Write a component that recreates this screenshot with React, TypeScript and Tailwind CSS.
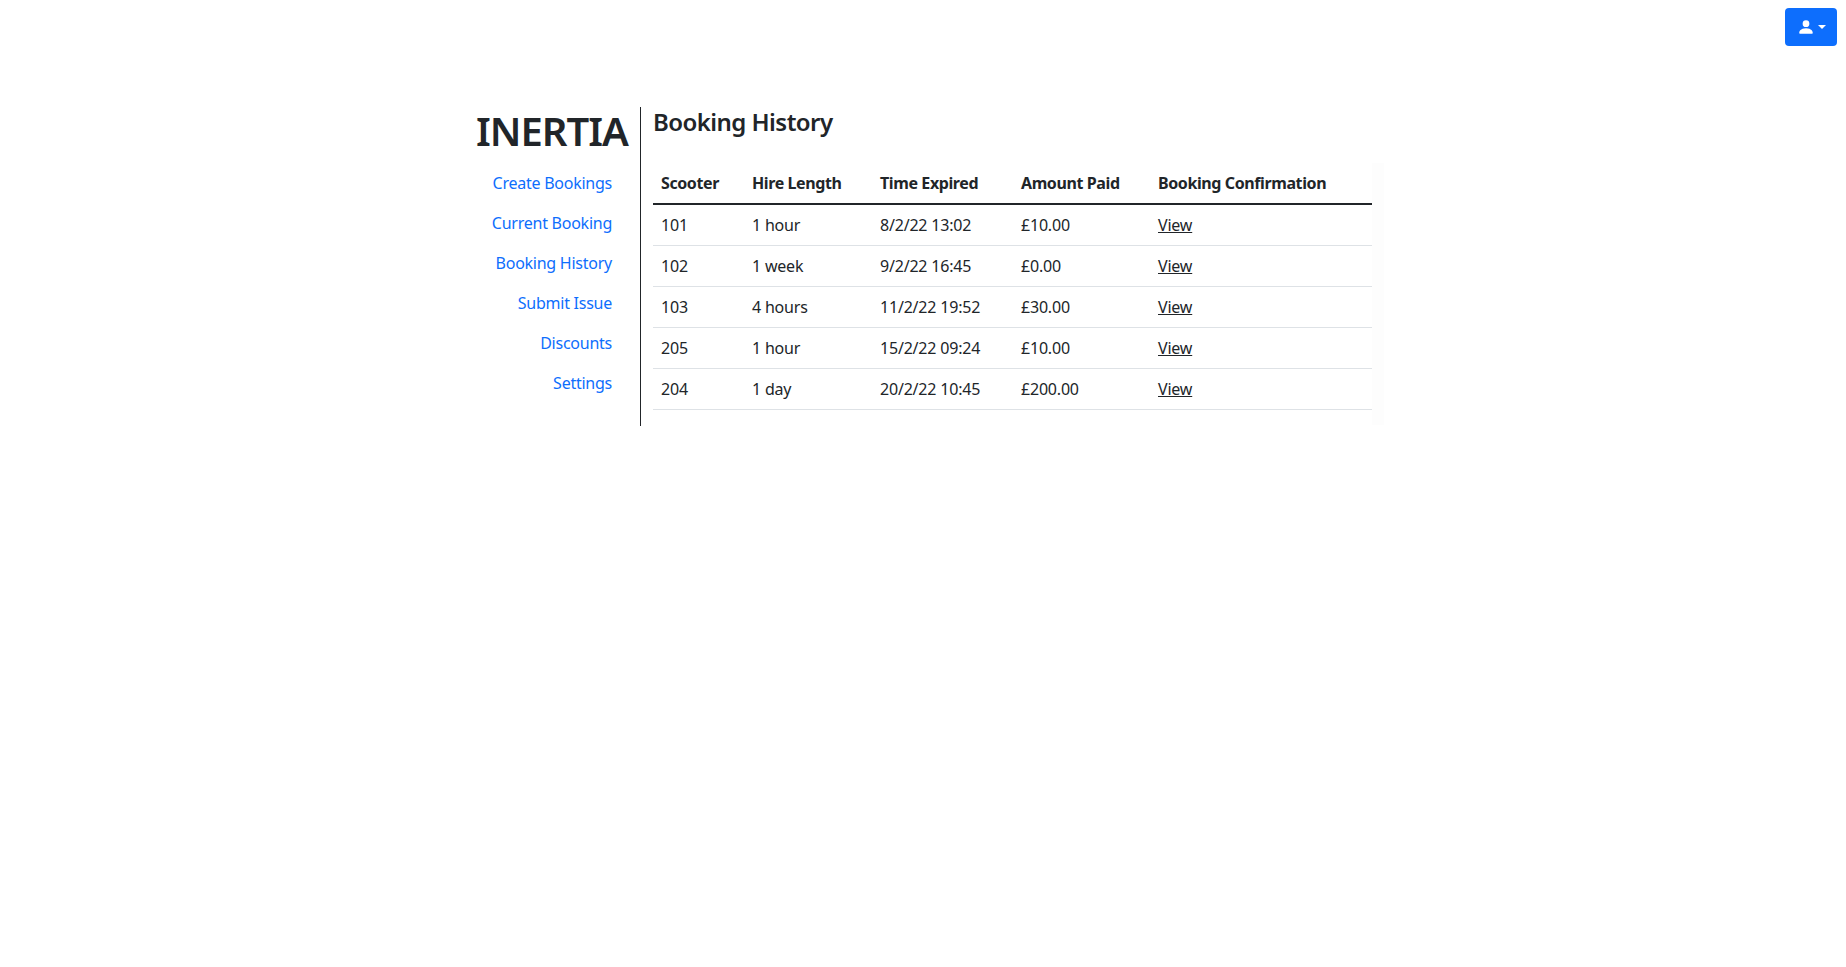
import React from "react";

const links = ["Create Bookings", "Current Booking", "Booking History", "Submit Issue", "Discounts", "Settings"];
const rows = [
  ["101", "1 hour", "8/2/22 13:02", "£10.00"],
  ["102", "1 week", "9/2/22 16:45", "£0.00"],
  ["103", "4 hours", "11/2/22 19:52", "£30.00"],
  ["205", "1 hour", "15/2/22 09:24", "£10.00"],
  ["204", "1 day", "20/2/22 10:45", "£200.00"],
];
const heads = ["Scooter", "Hire Length", "Time Expired", "Amount Paid", "Booking Confirmation"];

export default function App() {
  return (
    <div className="min-h-[967px] bg-white text-[#212529] text-[16px] leading-[24px] font-['Noto_Sans',sans-serif]">
      <div className="flex justify-end pt-2 pr-[9px]">
        <button className="w-[52px] h-[38px] rounded-[4px] bg-[#0d6efd] flex items-center justify-center gap-[3px] text-white">
          <svg width="18" height="18" viewBox="0 0 16 16" fill="currentColor">
            <path d="M3 14s-1 0-1-1 1-4 6-4 6 3 6 4-1 1-1 1H3zm5-6a3 3 0 1 0 0-6 3 3 0 0 0 0 6z" />
          </svg>
          <span className="w-0 h-0 border-x-[4px] border-x-transparent border-t-[4.5px] border-t-white" />
        </button>
      </div>
      <div className="flex w-[920px] ml-[464px] mt-[61px]">
        <aside className="w-[177px] h-[319px] border-r border-[#212529] pr-[12px] text-right">
          <h1 className="text-[40px] leading-[48px] font-semibold tracking-[-1px] mb-[8px] whitespace-nowrap">INERTIA</h1>
          <nav className="flex flex-col tracking-[-0.25px]">
            {links.map((l) => (
              <a key={l} href="#" className="h-[40px] pr-[16px] py-[8px] text-[#0d6efd] whitespace-nowrap">{l}</a>
            ))}
          </nav>
        </aside>
        <main className="flex-1 pl-[12px]">
          <h3 className="text-[24px] leading-[29px] font-semibold tracking-[-0.55px] mt-0 h-[56px] whitespace-nowrap">Booking History</h3>
          <div className="bg-[#fdfdfd] h-[262px]">
            <div className="bg-white w-[719px] h-full">
              <table className="w-[719px] table-fixed border-collapse tracking-[-0.2px]">
                <colgroup>
                  <col className="w-[91px]" />
                  <col className="w-[128px]" />
                  <col className="w-[141px]" />
                  <col className="w-[137px]" />
                  <col className="w-[222px]" />
                </colgroup>
                <thead>
                  <tr className="h-[41px] border-b-2 border-[#212529]">
                    {heads.map((h) => (
                      <th key={h} className="px-2 text-left font-bold tracking-[-0.4px] whitespace-nowrap">{h}</th>
                    ))}
                  </tr>
                </thead>
                <tbody>
                  {rows.map((r) => (
                    <tr key={r[0]} className="h-[41px] border-b border-[#dee2e6]">
                      {r.map((c, i) => (
                        <td key={i} className="px-2 whitespace-nowrap">{c}</td>
                      ))}
                      <td className="px-2"><a href="#" className="underline">View</a></td>
                    </tr>
                  ))}
                </tbody>
              </table>
            </div>
          </div>
        </main>
      </div>
    </div>
  );
}
